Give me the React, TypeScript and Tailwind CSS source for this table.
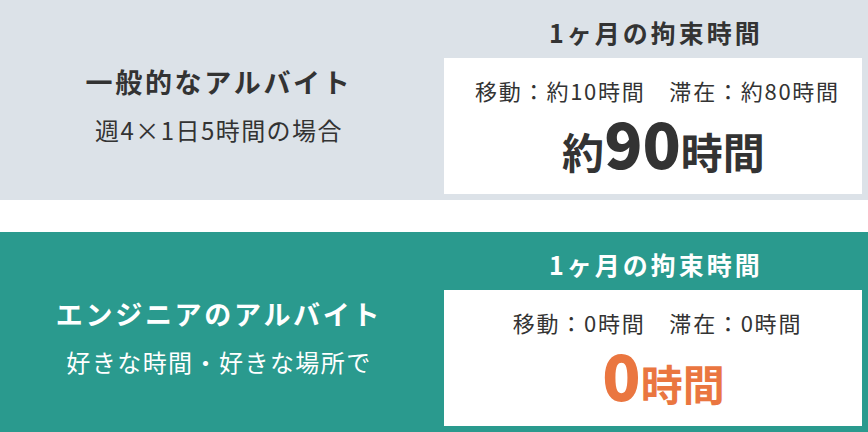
const Panel = ({
  dark,
  title,
  sub,
  detail,
  total,
  prefix,
}: {
  dark: boolean
  title: string
  sub: string
  detail: string
  total: string
  prefix?: string
}) => {
  return (
    <section className={`flex h-[200px] ${dark ? "bg-[#2a9a8e]" : "bg-[#dce2e8]"}`}>
      {/* left label */}
      <div className={`w-[444px] pr-[6px] pt-[12px] flex flex-col items-center justify-center ${dark ? "text-white" : "text-[#333333]"}`}>
        <h2 className="text-[27px] font-bold tracking-[0.1em] leading-[36px]">{title}</h2>
        <p className="mt-[12px] text-[24px] tracking-[0.06em] leading-[36px]">{sub}</p>
      </div>

      {/* right box */}
      <div className="flex-1 flex flex-col pb-[6px]">
        <h3 className={`h-[58px] pt-[8px] flex items-center justify-center text-[25px] font-bold tracking-[0.12em] ${dark ? "text-white" : "text-[#333333]"}`}>
          1ヶ月の拘束時間
        </h3>
        <div className="flex-1 mr-[6px] bg-white pl-[9px] flex flex-col items-center text-[#333333]">
          <p className="mt-[17px] text-[22px] leading-[30px] tracking-[0.08em]">{detail}</p>
          <p className={`mt-[5px] pl-[12px] flex items-baseline font-bold leading-none ${dark ? "text-[#ea7640]" : "text-[#333333]"}`}>
            {prefix && <span className="text-[42px]">{prefix}</span>}
            <span className="text-[63px] font-black">{total}</span>
            <span className="text-[42px]">時間</span>
          </p>
        </div>
      </div>
    </section>
  )
}

export default function App() {
  return (
    <div className="w-[868px] h-[432px] bg-white font-['Noto_Sans_CJK_JP',sans-serif]">
      <Panel
        dark={false}
        title="一般的なアルバイト"
        sub="週4×1日5時間の場合"
        detail="移動：約10時間　滞在：約80時間"
        prefix="約"
        total="90"
      />
      <div className="h-[32px]" />
      <Panel
        dark={true}
        title="エンジニアのアルバイト"
        sub="好きな時間・好きな場所で"
        detail="移動：0時間　滞在：0時間"
        total="0"
      />
    </div>
  )
}
